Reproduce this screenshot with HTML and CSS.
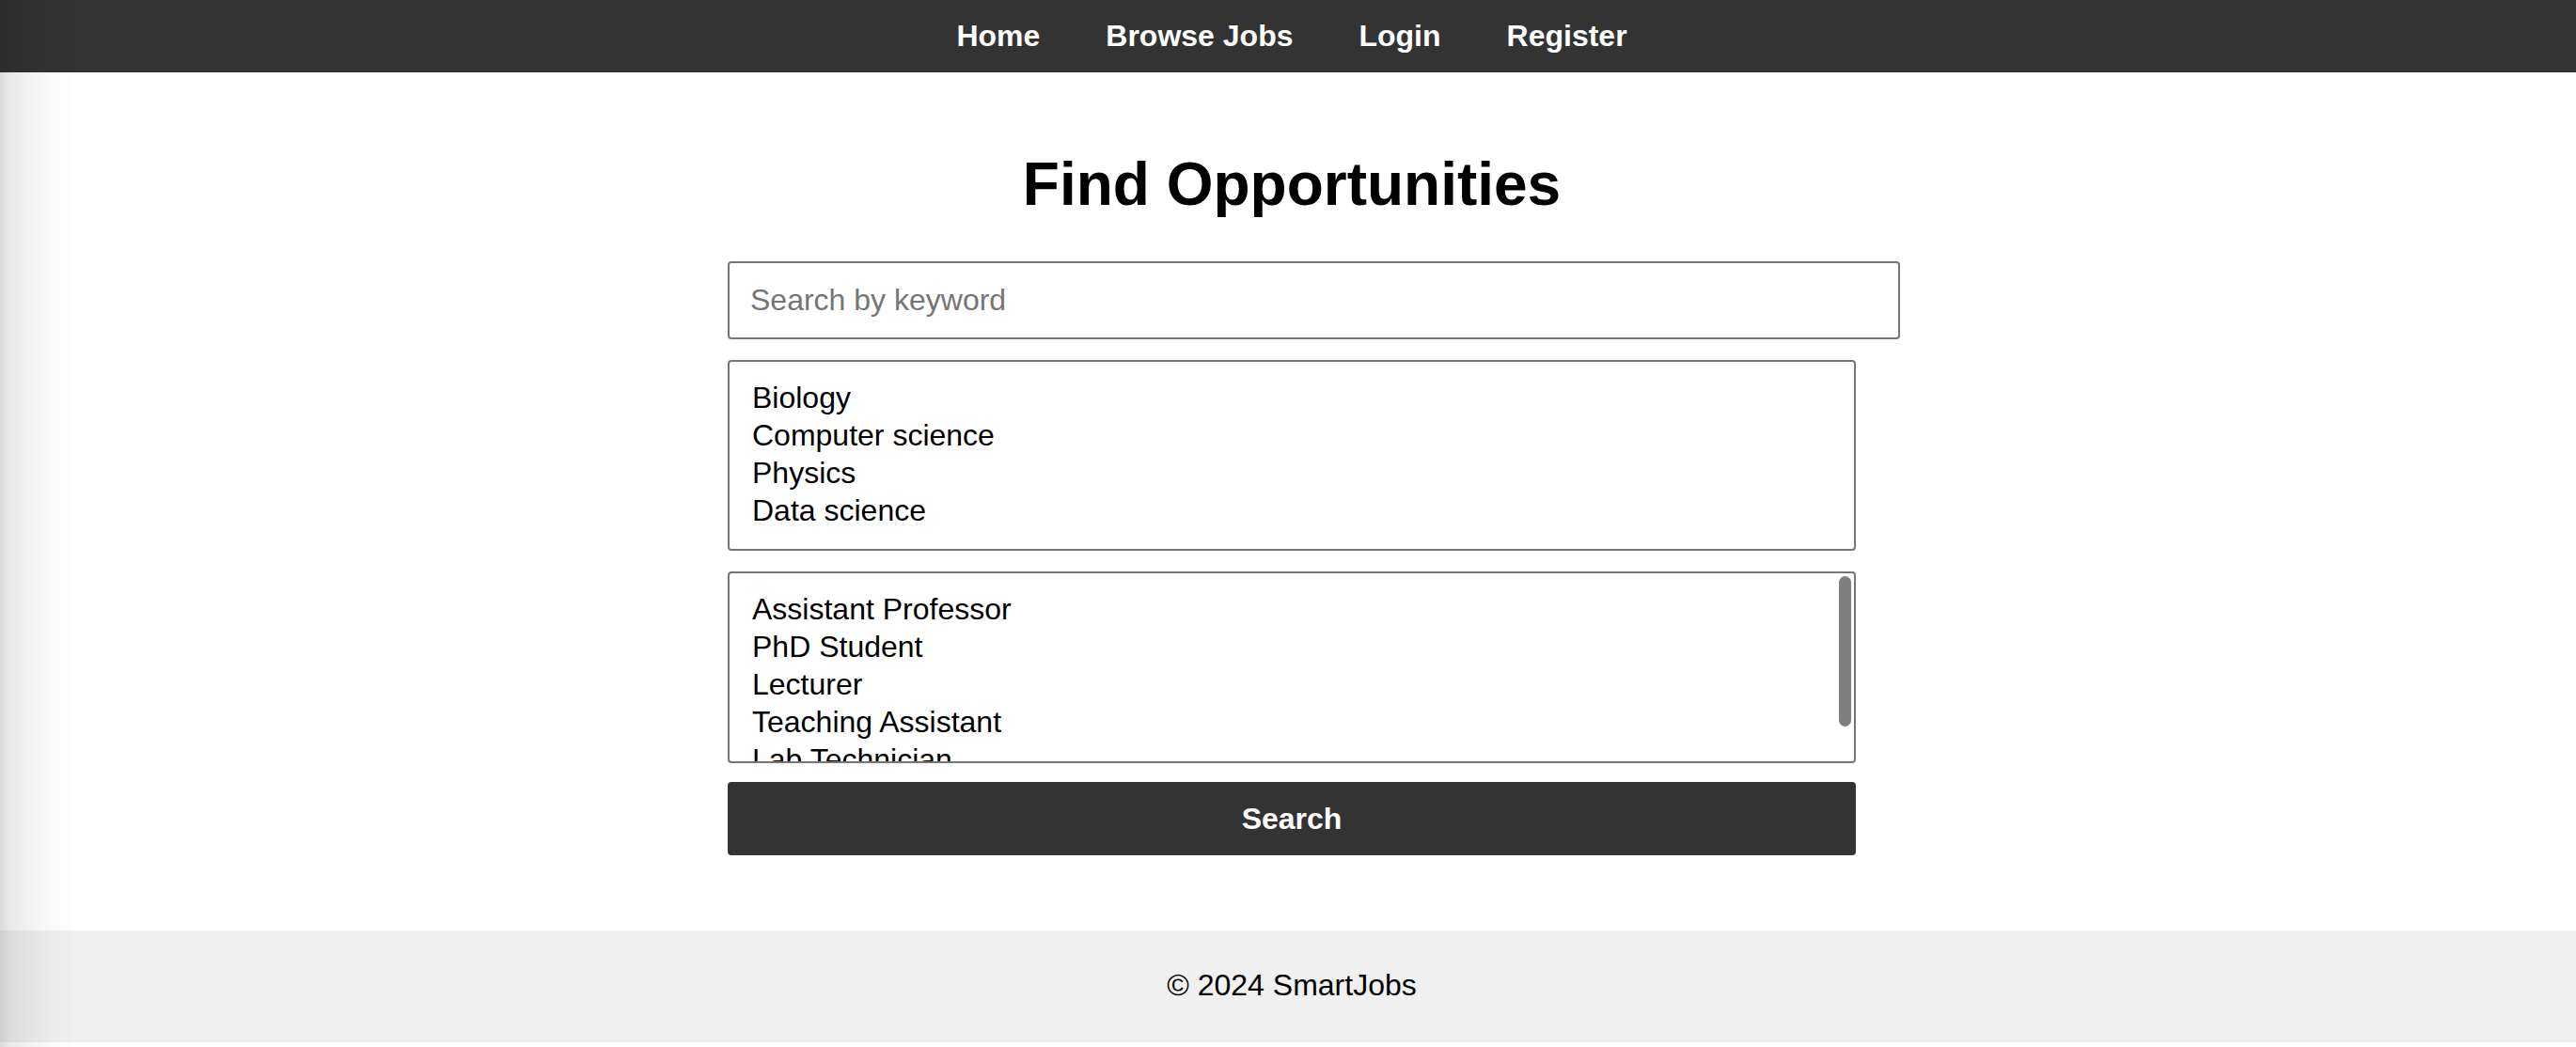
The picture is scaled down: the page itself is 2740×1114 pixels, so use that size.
FILE: index.html
```html
<!DOCTYPE html>
<html lang="en">
<head>
<meta charset="utf-8">
<title>SmartJobs - Find Opportunities</title>
<link rel="stylesheet" href="styles.css">
</head>
<body>
<div class="edge-shade"></div>
<nav class="topnav">
  <a href="#" class="nav-link">Home</a>
  <a href="#" class="nav-link">Browse Jobs</a>
  <a href="#" class="nav-link">Login</a>
  <a href="#" class="nav-link">Register</a>
</nav>
<main class="main">
  <div class="container">
    <h1 class="title">Find Opportunities</h1>
    <form class="search-form" onsubmit="return false;">
      <input class="keyword" type="text" placeholder="Search by keyword">
      <div class="listbox listbox-fields">
        <div class="opt">Biology</div>
        <div class="opt">Computer science</div>
        <div class="opt">Physics</div>
        <div class="opt">Data science</div>
      </div>
      <div class="listbox listbox-roles">
        <div class="opt">Assistant Professor</div>
        <div class="opt">PhD Student</div>
        <div class="opt">Lecturer</div>
        <div class="opt">Teaching Assistant</div>
        <div class="opt">Lab Technician</div>
        <div class="thumb"></div>
      </div>
      <button class="search-btn" type="submit">Search</button>
    </form>
  </div>
</main>
<footer class="footer">&copy; 2024 SmartJobs</footer>
</body>
</html>
```

FILE: styles.css
```css
html, body {
  margin: 0;
  padding: 0;
  background: #ffffff;
}

body {
  font-family: "Liberation Sans", Arial, Helvetica, sans-serif;
  color: #000;
  font-size: 32px;
}

.edge-shade {
  position: fixed;
  left: 0;
  top: 0;
  bottom: 0;
  width: 80px;
  pointer-events: none;
  z-index: 10;
  background: linear-gradient(to right,
    rgba(0,0,0,0.14) 0px,
    rgba(0,0,0,0.085) 10px,
    rgba(0,0,0,0.05) 30px,
    rgba(0,0,0,0.02) 55px,
    rgba(0,0,0,0) 80px);
}

.topnav {
  height: 77px;
  background: #333333;
  display: flex;
  justify-content: center;
  align-items: center;
  gap: 70px;
  padding-left: 8px;
}

.nav-link {
  color: #ffffff;
  font-weight: bold;
  font-size: 32px;
  text-decoration: none;
}

.main {
  padding: 40px 0 80px 8px;
}

.container {
  width: 1200px;
  margin: 0 auto;
}

.title {
  font-size: 64px;
  font-weight: bold;
  line-height: 1.15;
  text-align: center;
  margin: 43px 0 44px;
}

.search-form {
  display: flex;
  flex-direction: column;
  align-items: flex-start;
}

.keyword {
  box-sizing: border-box;
  width: 1247px;
  height: 83px;
  margin: 0 0 22px;
  padding: 0 22px;
  border: 2px solid #767676;
  border-radius: 4px;
  font-family: inherit;
  font-size: 32px;
  color: #000;
  background: #fff;
  outline: none;
}

.keyword::placeholder {
  color: #757575;
}

.listbox {
  position: relative;
  box-sizing: border-box;
  width: 1200px;
  border: 2px solid #767676;
  border-radius: 4px;
  padding: 18px 24px 0;
  overflow: hidden;
  background: #fff;
}

.listbox-fields {
  height: 203px;
  margin-bottom: 22px;
}

.listbox-roles {
  height: 204px;
  margin-bottom: 20px;
}

.opt {
  font-size: 32px;
  line-height: 40px;
  white-space: nowrap;
}

.thumb {
  position: absolute;
  top: 3px;
  right: 3px;
  width: 13px;
  height: 160px;
  border-radius: 7px;
  background: #7f7f7f;
}

.search-btn {
  box-sizing: border-box;
  width: 1200px;
  height: 78px;
  border: none;
  border-radius: 4px;
  background: #333333;
  color: #ffffff;
  font-family: inherit;
  font-size: 32px;
  font-weight: bold;
  padding-top: 2px;
  cursor: pointer;
}

.footer {
  background: #f0f0f0;
  text-align: center;
  font-size: 32px;
  padding: 40px 0 42px 8px;
}
```
